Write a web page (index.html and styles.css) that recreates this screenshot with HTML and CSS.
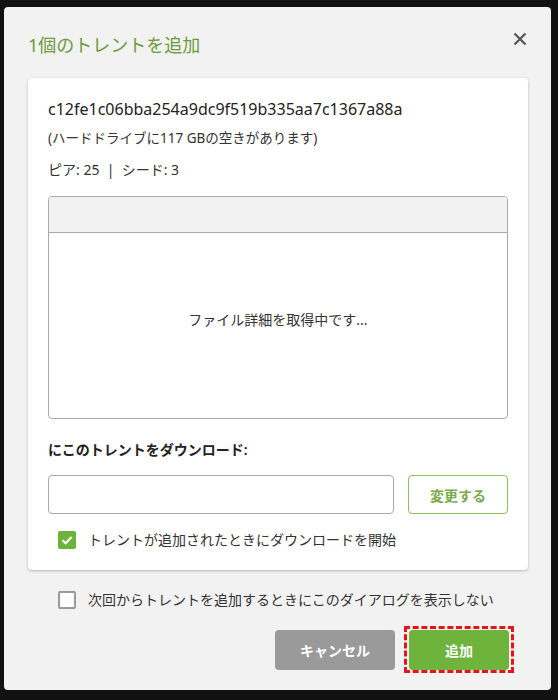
FILE: index.html
```html
<!DOCTYPE html>
<html lang="ja">
<head>
<meta charset="utf-8">
<link rel="stylesheet" href="styles.css">
</head>
<body>
<div class="dialog">
  <div class="header">
    <div class="title">1個のトレントを追加</div>
    <svg class="close" width="14" height="14" viewBox="0 0 14 14"><path d="M1.5 1.5 L12.5 12.5 M12.5 1.5 L1.5 12.5" stroke="#555" stroke-width="2.2" fill="none"/></svg>
  </div>
  <div class="card">
    <div class="hash">c12fe1c06bba254a9dc9f519b335aa7c1367a88a</div>
    <div class="space">(ハードドライブに117 GBの空きがあります)</div>
    <div class="peers">ピア: 25 &nbsp;|&nbsp; シード: 3</div>
    <div class="files">
      <div class="files-head"></div>
      <div class="files-body">ファイル詳細を取得中です...</div>
    </div>
    <div class="label">にこのトレントをダウンロード:</div>
    <div class="path-row">
      <div class="path-input"></div>
      <div class="change-btn">変更する</div>
    </div>
    <div class="check-row">
      <span class="box checked"><svg width="18" height="18" viewBox="0 0 18 18"><path d="M4.5 9.2 L7.6 12.2 L13.6 6" stroke="#fff" stroke-width="2.2" fill="none"/></svg></span>
      <span>トレントが追加されたときにダウンロードを開始</span>
    </div>
  </div>
  <div class="check-row outer">
    <span class="box"></span>
    <span>次回からトレントを追加するときにこのダイアログを表示しない</span>
  </div>
  <div class="actions">
    <div class="btn cancel">キャンセル</div>
    <div class="btn add">追加</div>
  </div>
</div>
</body>
</html>
```
FILE: styles.css
```css
* { box-sizing: border-box; }
html, body { margin: 0; padding: 0; }
body {
  background: #111;
  width: 558px;
  height: 700px;
  overflow: hidden;
  font-family: "Noto Sans", "Noto Sans CJK JP", sans-serif;
  color: #222;
}
.dialog {
  margin: 7px 0 0 4px;
  width: 547px;
  height: 683px;
  background: #f2f2f2;
  border-radius: 4px;
  padding: 0 23px 0 24px;
  display: flex;
  flex-direction: column;
}
.header {
  height: 71px;
  display: flex;
  align-items: flex-start;
  justify-content: space-between;
}
.title {
  margin-top: 25px;
  font-size: 18px;
  line-height: 26px;
  color: #6e9a40;
}
.close { margin-top: 25px; margin-right: 1px; }
.card {
  background: #fff;
  border-radius: 4px;
  box-shadow: 0 1px 3px rgba(0,0,0,0.25);
  padding: 20px 20px 21px 20px;
  height: 492px;
}
.hash { font-size: 16px; line-height: 22px; color: #222; }
.space { font-size: 13.5px; line-height: 20px; margin-top: 8px; color: #333; }
.peers { font-size: 14px; line-height: 20px; margin-top: 12px; color: #333; }
.files {
  margin-top: 16px;
  height: 223px;
  border: 1px solid #a9a9a9;
  border-radius: 4px;
  display: flex;
  flex-direction: column;
  overflow: hidden;
}
.files-head {
  height: 36px;
  background: #f2f2f2;
  border-bottom: 1px solid #a9a9a9;
}
.files-body {
  flex: 1;
  display: flex;
  align-items: center;
  justify-content: center;
  font-size: 14px;
  color: #333;
  padding-bottom: 14px;
}
.label {
  margin-top: 21px;
  font-size: 14px;
  line-height: 20px;
  font-weight: 600;
  color: #222;
}
.path-row {
  margin-top: 15px;
  display: flex;
  gap: 14px;
}
.path-input {
  width: 346px;
  height: 39px;
  border: 1px solid #a9a9a9;
  border-radius: 4px;
}
.change-btn {
  width: 100px;
  height: 39px;
  border: 1px solid #8cc15a;
  border-radius: 4px;
  color: #7aaa4a;
  font-size: 14px;
  font-weight: 700;
  display: flex;
  align-items: center;
  justify-content: center;
}
.check-row {
  margin-top: 16px;
  padding-left: 10px;
  display: flex;
  align-items: center;
  gap: 12px;
  font-size: 14px;
  line-height: 20px;
  color: #333;
}
.box {
  width: 18px;
  height: 18px;
  border: 2px solid #999;
  border-radius: 2px;
  display: inline-block;
  flex: none;
  background: #fff;
}
.box.checked {
  border: none;
  background: #6cb33c;
}
.box.checked svg { display: block; }
.check-row.outer {
  margin-top: 20px;
  padding-left: 30px;
}
.actions {
  margin-top: 20px;
  display: flex;
  justify-content: flex-end;
  gap: 14px;
  padding-right: 19px;
}
.btn {
  height: 40px;
  border-radius: 4px;
  color: #fff;
  font-size: 14px;
  font-weight: 700;
  display: flex;
  align-items: center;
  justify-content: center;
}
.cancel { width: 120px; background: #9a9a9a; }
.add {
  width: 100px;
  background: #6db33c;
  position: relative;
}
.add::after {
  content: "";
  position: absolute;
  left: -5px;
  top: -4px;
  right: -5px;
  bottom: -3px;
  border: 3px dashed #e8141c;
}
```
